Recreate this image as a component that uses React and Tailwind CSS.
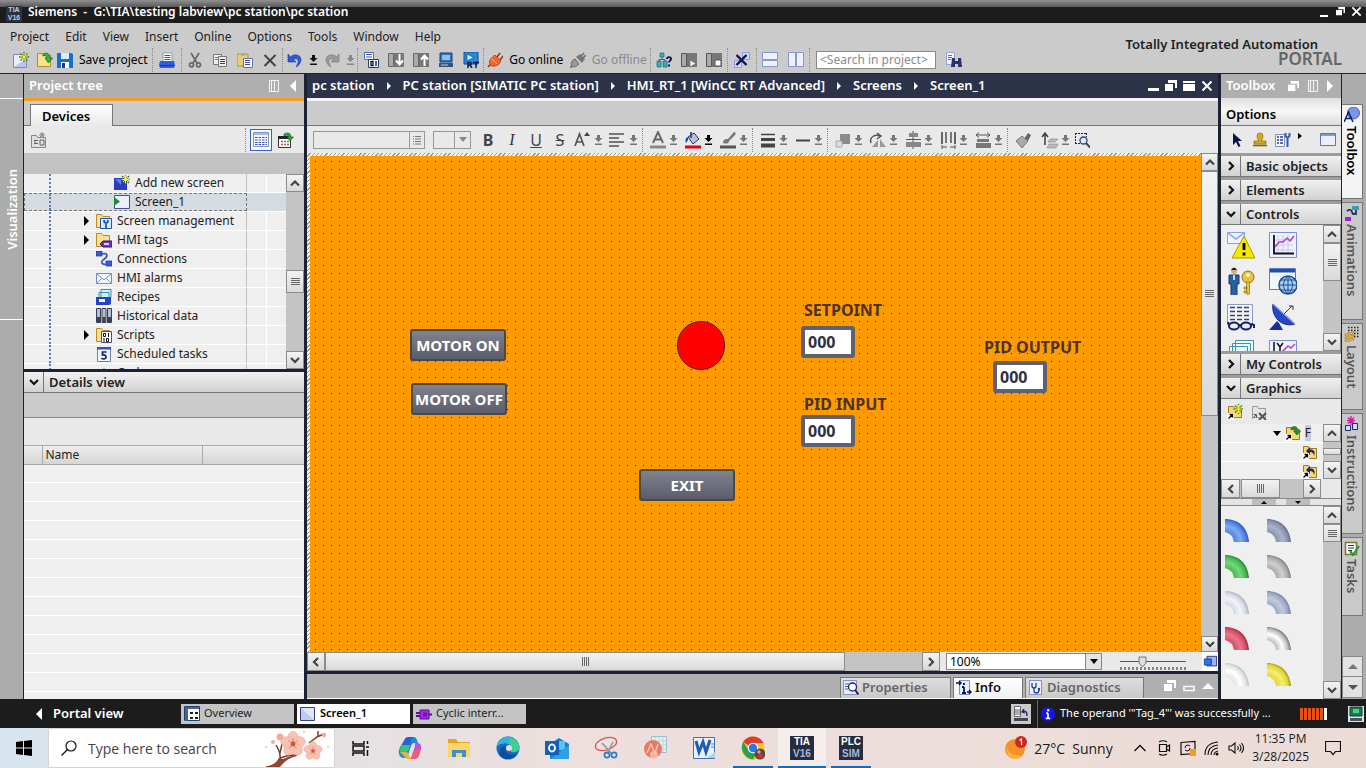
import clsx from 'clsx';

/* ---------- small building blocks ---------- */

const Ico = ({ children, className = 'w-4 h-4', box = '0 0 16 16' }) => (
  <svg viewBox={box} className={clsx('shrink-0', className)} aria-hidden="true">{children}</svg>
);

const chevrons = {
  up: 'M3 9.5 L7 5.5 L11 9.5',
  down: 'M3 5 L7 9 L11 5',
  left: 'M9 3 L5 7 L9 11',
  right: 'M5 3 L9 7 L5 11',
};

const Chevron = ({ dir, color = '#444', className = 'w-[14px] h-[14px]' }) => (
  <Ico box="0 0 14 14" className={className}>
    <path d={chevrons[dir]} fill="none" stroke={color} strokeWidth="2.2" />
  </Ico>
);

const ScrollButton = ({ dir, className }) => (
  <button
    aria-label={`Scroll ${dir}`}
    className={clsx('shrink-0 flex items-center justify-center border border-[#8c8c8c] bg-linear-to-b from-[#f4f4f4] to-[#d8d8d8]', className)}
  >
    <Chevron dir={dir} />
  </button>
);

const Grip = ({ vertical }) => (
  <Ico box="0 0 9 9" className="w-[9px] h-[9px]">
    <path
      d={vertical ? 'M0 1.5H9M0 3.5H9M0 5.5H9M0 7.5H9' : 'M1.5 0V9M3.5 0V9M5.5 0V9M7.5 0V9'}
      stroke="#666"
      strokeWidth="1"
    />
  </Ico>
);

const Thumb = ({ vertical, className, grip = true }) => (
  <div className={clsx('shrink-0 flex items-center justify-center border border-[#8c8c8c] bg-linear-to-b from-[#f2f2f2] to-[#dadada]', className)}>
    {grip && <Grip vertical={vertical} />}
  </div>
);

const DropArrow = ({ color = '#777' }) => (
  <Ico box="0 0 9 12" className="w-[9px] h-3">
    <path d="M3 1h3v3h2.500L4.500 8L.5 4H3zM1 9.500h7v1.500H1z" fill={color} />
  </Ico>
);

const WinRestore = ({ className = 'w-3 h-3' }) => (
  <Ico box="0 0 12 12" className={className}>
    <path d="M3 0h9v8h-2V3H3z" fill="#fff" />
    <path d="M0 4h8v7H0z" fill="#fff" />
  </Ico>
);

const Columns = () => (
  <Ico box="0 0 12 12" className="w-3 h-3">
    <path d="M1.500 1v10M3.500 1v10M1 .5h5M1 11.500h5M6.500.5h4v11h-4z" fill="none" stroke="#f4f4f4" />
  </Ico>
);

const CloseX = ({ color = '#fff', className = 'w-3 h-3' }) => (
  <Ico box="0 0 12 12" className={className}>
    <path d="M1.500 1.500l9 9M10.500 1.500l-9 9" stroke={color} strokeWidth="2" />
  </Ico>
);

/* ---------- icon drawings ---------- */

const Star = ({ x = 11, y = 5 }) => (
  <g transform={`translate(${x} ${y})`}>
    <path d="M0-5V5M-5 0H5M-3.500-3.500L3.500 3.500M3.500-3.500L-3.500 3.500" stroke="#3b6b18" strokeWidth="1.300" />
    <path d="M0-4V4M-4 0H4M-2.500-2.500L2.500 2.500M2.500-2.500L-2.500 2.500" stroke="#f2f53a" strokeWidth="1" />
  </g>
);

const Folder = () => (
  <path d="M.5 1.500h5l1.500 2h6.500v11H.5z" fill="#fbe08b" stroke="#b98a2b" />
);

const icons = {
  newFile: <><path d="M.5 2.500h10l3 3v10H.5z" fill="#e8edff" stroke="#7d88bd" /><path d="M1 15l12-8v8z" fill="#b9c6ef" /><Star /></>,
  open: <><Folder /><path d="M6 2c4-2 7 0 7 4h2.500L11.500 11 8 6h2c0-2-2-3-4-2z" fill="#3fae3f" stroke="#14691f" strokeWidth=".8" /></>,
  save: <><path d="M0 1h14l2 1v14H0z" fill="#1672c9" /><path d="M4 1h8v6H4z" fill="#d9ecfb" /><path d="M4 10h8v6H4z" fill="#fff" /><path d="M5 11h3v5H5z" fill="#1b3d6e" /></>,
  print: <><path d="M4 1h9v9H4z" fill="#fff" stroke="#8b97c4" /><path d="M5.500 3.500h6M5.500 5.500h6M5.500 7.500h6" stroke="#3a4ba5" /><path d="M1 9h14l1 4-1 3H1l-1-3z" fill="#2f5be0" /><path d="M1 13.500h14" stroke="#1c348f" /></>,
  cut: <g fill="none" stroke="#6a6a6a" strokeWidth="1.700"><path d="M4 1l6 10M12 1L6 11" /><circle cx="4.500" cy="12.800" r="2" /><circle cx="11.500" cy="12.800" r="2" /></g>,
  copy: <g fill="#eee" stroke="#777"><path d="M1.500 2.500h8v10h-8z" /><path d="M3 5.500h4M3 7.500h4" /><path d="M6.500 4.500h8v10h-8z" /><path d="M8 7.500h5M8 9.500h5M8 11.500h5" stroke="#444" /></g>,
  paste: <><path d="M0 2h11v12H0z" fill="#e7cf6d" stroke="#a89443" /><path d="M4 1h4v3H4z" fill="#9fa9c4" /><path d="M6.500 6.500h9v9h-9z" fill="#fff" stroke="#6672ab" /><path d="M8 8.500h5M8 10.500h5M8 12.500h5" stroke="#3b479a" /></>,
  del: <path d="M2.500 3l11 11M13.500 3l-11 11" stroke="#444" strokeWidth="2" />,
  undo: <path d="M1 2v8h8L6.500 7.500C10 5.500 13 8 10 13l-1 2c6-3 7-11 1-12-2.500-.5-4.500 0-6.500 2z" fill="#3257d8" stroke="#203a9c" strokeWidth=".6" />,
  redo: <path d="M15 2v8H7l2.500-2.500C6 5.500 3 8 6 13l1 2C1 12 0 4 6 3c2.500-.5 4.500 0 6.500 2z" fill="#9a9a9a" stroke="#777" strokeWidth=".6" />,
  compile: <><path d="M1.500.5h9v7h-9z" fill="#fff" stroke="#5b6c96" /><path d="M3 2.500h6M3 5h6" stroke="#2f57c9" /><path d="M5.500 7.500h10v8h-10z" fill="#f4f8ff" stroke="#243b74" /><path d="M8 9.500h2v4H8zM13 9v5" stroke="#111" fill="none" strokeWidth="1.300" /></>,
  download: <><path d="M.5 1.500h5v13h-5z" fill="#aaa" stroke="#666" /><path d="M6 1h10v14H6z" fill="#777" /><path d="M11.500 2v10M8 8.500l3.500 4 3.500-4" stroke="#fff" strokeWidth="2" fill="none" /></>,
  upload: <><path d="M.5 1.500h5v13h-5z" fill="#aaa" stroke="#666" /><path d="M6 1h10v14H6z" fill="#777" /><path d="M11.500 14V4M8 7.500l3.500-4 3.500 4" stroke="#fff" strokeWidth="2" fill="none" /></>,
  simPc: <><path d="M2 1h12v9H2z" fill="#3273b8" stroke="#1c3f72" /><path d="M4 3h8v5H4z" fill="#83c4ec" /><path d="M1 11h14v4H1z" fill="#35527c" /><path d="M3 13h7" stroke="#bcd" /></>,
  rt: <><path d="M1 0h14v12H1z" fill="#2487e0" stroke="#0d4f97" /><path d="M4 2v7l7-3.500z" fill="#bff0ff" stroke="#0b3a6e" strokeWidth=".6" /><path d="M5 16v-5.500h2.500q1.500 1.200 0 2.500H5M7 13l2 3M10 10.500h6M13 10.500V16" stroke="#0b1a4c" strokeWidth="1.500" fill="none" /></>,
  plugOn: <><path d="M1 15l3-3M10 5l3-4M13 8l3-4" stroke="#8d3a12" strokeWidth="1.600" /><path d="M3 13c-2-4 1-7 5-10l6 6c-2 4-6 7-11 4z" fill="#f0672b" stroke="#b23a0c" strokeWidth=".8" /><path d="M5 7l5 5" stroke="#ffc19e" /></>,
  plugOff: <><path d="M0 16l4-4M10 5l4-4M12 7l4-4" stroke="#666" strokeWidth="1.500" /><path d="M2 14c-2-3 0-6 3-7l4 5c-2 2-5 4-7 2z" fill="#999" stroke="#666" /><path d="M6 5l4-3 5 5-3 4z" fill="#777" /></>,
  access: <><path d="M4 1h4v4H4zM1 9h4v6H1zM7 9h4v6H7z" fill="#37b0b4" stroke="#126f72" strokeWidth=".7" /><path d="M6 5v3M3 9V7.500h6V9" stroke="#7b3fae" fill="none" /><path d="M11 7c0-2.500 4-2.500 4 0 0 1.500-2 1.800-2 3.500" stroke="#0c1650" strokeWidth="1.900" fill="none" /><path d="M12 12.500h2v2h-2z" fill="#0c1650" /></>,
  cpuStart: <><path d="M.5 1.500h5v13h-5z" fill="#aaa" stroke="#555" /><path d="M6 1h10v14H6z" fill="#777" /><path d="M9 8v7l6-3.500z" fill="#eee" stroke="#555" strokeWidth=".5" /></>,
  cpuStop: <><path d="M.5 1.500h5v13h-5z" fill="#aaa" stroke="#555" /><path d="M6 1h10v14H6z" fill="#777" /><path d="M9 8h6v6H9z" fill="#fff" stroke="#555" /></>,
  crossRef: <><path d="M8.500.5h7v7h-7zM.5 8.500h7v7h-7z" fill="#cfd9fb" stroke="#8da0dd" /><path d="M2.500 3l10 10M12.500 3l-10 10" stroke="#0c1650" strokeWidth="2.400" /></>,
  splitH: <path d="M.5.5h15v7H.5zM.5 8.500h15v6H.5z" fill="#f0f3ff" stroke="#8396dc" />,
  splitV: <path d="M.5.5h7v14h-7zM8.500.5h7v14h-7z" fill="#f0f3ff" stroke="#8396dc" />,
  find: <><path d="M.5.5h8v12h-8z" fill="#eef2ff" stroke="#98a6d8" /><path d="M2 3.500h4M2 5.500h4M2 7.500h3" stroke="#5470cf" /><path d="M6 6h3v9H5zM12 6h3l1 9h-4zM9 9h3v3H9z" fill="#27356d" /></>,
  newDevice: <g fill="none" stroke="#888"><path d="M.5 3.500h5l1 2h8v10H.5z" fill="#e0e0e0" /><path d="M3 8.500h4M3 11.500h4M9 8h4v5H9zM4 8v4" stroke="#666" /><path d="M11 0v6M8 3h6M9 1l4 4M13 1L9 5" /></g>,
  listView: <><path d="M.5.5h15v14H.5z" fill="#f5f8ff" stroke="#8593c2" /><path d="M1 1h14v2H1z" fill="#a9bbed" /><path d="M2 5.500h12M2 8h12M2 10.500h12M2 12.500h12" stroke="#3f56a8" strokeDasharray="2.500 1" /></>,
  export: <><path d="M.5 4.500h12v11H.5z" fill="#fff" stroke="#333" /><path d="M0 4h13v3H0z" fill="#223" /><path d="M3 9.500h8M3 12.500h8" stroke="#a9603a" strokeWidth="1.600" strokeDasharray="2 1" /><path d="M6 2c4-2 7-1 7 3h2.500L12 9 9 5h1.500C10 3 8 3 6 4z" fill="#2f9b3c" stroke="#125a1c" strokeWidth=".6" /></>,
  addScreen: <><path d="M0 3h13v12H0z" fill="#2b3cc4" /><path d="M1 4h6v6z" fill="#6a7ae8" /><Star x={11.5} y={4.5} /></>,
  screen: <><path d="M.5 1.500h15v13H.5z" fill="#e8f0fb" stroke="#3e5385" /><path d="M0 3v9l6-4.500z" fill="#1d8a34" /></>,
  screenMgmt: <><Folder /><path d="M4.500 5.500h11v10h-11z" fill="#dbe9ff" stroke="#2953a6" /><path d="M10 15v-5M8 7q0 3 2 3t2-3" stroke="#1d4fb5" strokeWidth="1.700" fill="none" /></>,
  tags: <><Folder /><path d="M4 12l3-3h9v6H7z" fill="#6a36b8" stroke="#35157a" /><path d="M8 12h5" stroke="#fff" strokeWidth="1.500" /></>,
  connections: <><path d="M0 0h6v5H0zM10 10h6v5h-6z" fill="#3c5bd4" stroke="#1c3294" strokeWidth=".7" /><path d="M5 3c8-2 7 3 2 6-3 3 0 5 4 4" fill="none" stroke="#3454cd" strokeWidth="1.700" /></>,
  alarms: <g fill="#f7faff" stroke="#6d8fdc"><path d="M.5 3.500h15v10H.5z" /><path d="M1 4l7 6 7-6M1 13l5-5M15 13l-5-5" fill="none" /></g>,
  recipes: <><path d="M5 .5h10v8H5zM3 3.500h10v7H3z" fill="#d2f0f7" stroke="#3792aa" /><path d="M0 8h15v7l-2 1H0z" fill="#2443c4" /><path d="M3 10h6v3H3z" fill="#fff" /></>,
  history: <><path d="M.5.500h4v14h-4zM6 .5h4v14H6zM11.500.5h4v14h-4z" fill="#b9bfcc" stroke="#3a4053" /><path d="M1 9h3v5H1zM6.500 9h3v5h-3zM12 9h3v5h-3z" fill="#38405c" /></>,
  scripts: <><Folder /><path d="M5.500 4.500h10v11h-10z" fill="#fff" stroke="#44527e" /><path d="M7.500 6.500h2v3h-2zM12.500 6v4M8 11v4M10.500 11.500h2v3h-2z" fill="none" stroke="#111" /></>,
  tasks: <><path d="M1.500 1.500h13v14h-13z" fill="#f3f6ff" stroke="#7182bd" /><path d="M1 1h14v2.500H1z" fill="#2e4fd0" /><path d="M10.500 6h-4v3c4-.8 5 4 1 4-1 0-1.500-.3-2-.8" fill="none" stroke="#14246e" strokeWidth="1.700" /></>,
  cycles: <path d="M2 7h3l3-4 3 4h3l-6 7z" fill="#4d5fc0" />,
};

const IconButton = ({ name, label, className = 'w-5 h-5' }) => (
  <button aria-label={label || name} className={clsx('flex items-center justify-center shrink-0', className)}>
    <Ico>{icons[name]}</Ico>
  </button>
);

const Group = ({ className, start, children }) => (
  <div className={clsx('h-6 shrink-0 flex items-center border-r border-dotted border-[#8a8a8a]', start ? 'justify-start' : 'justify-around', className)}>
    {children}
  </div>
);

/* ---------- title bar, menu and main toolbar ---------- */

const TitleBar = () => (
  <header className="h-[23px] shrink-0 flex items-center justify-between pl-1.5 pr-1 text-white bg-linear-to-b from-[#909090] via-[#5a5a5a] via-30% to-[#1c1c1c] to-31%">
    <div className="flex items-center gap-1.5">
      <span className="w-4 h-4 mt-1 bg-[#2a3143] text-[7px] leading-[8px] font-bold font-['Liberation_Sans',sans-serif] text-[#c3cce2] flex flex-col items-center">
        <span>TIA</span><span>V16</span>
      </span>
      <h1 className="text-[12px] leading-4 font-semibold whitespace-pre">Siemens  -  G:\TIA\testing labview\pc station\pc station</h1>
    </div>
    <div className="flex items-center gap-1.5">
      <button aria-label="Minimize"><Ico box="0 0 12 12" className="w-3 h-3"><path d="M2 9h8v2H2z" fill="#fff" /></Ico></button>
      <button aria-label="Restore"><WinRestore className="w-[9px] h-[9px]" /></button>
      <button aria-label="Close"><CloseX className="w-[11px] h-[11px]" /></button>
    </div>
  </header>
);

const menu = ['Project', 'Edit', 'View', 'Insert', 'Online', 'Options', 'Tools', 'Window', 'Help'];

const MainToolbar = () => (
  <div className="h-[51px] shrink-0 flex justify-between bg-[#cbcbcb] border-b border-[#1c2233]">
    <div>
      <nav className="h-[25px] pl-2.5 pt-[3px] flex items-center gap-4">
        {menu.map((item) => <button key={item} className="leading-5">{item}</button>)}
      </nav>
      <div className="h-6 pl-[9px] flex items-center">
        <Group className="w-[144px]">
          <IconButton name="newFile" label="New project" className="w-6 h-5" />
          <IconButton name="open" label="Open project" className="w-6 h-5" />
          <button className="flex-1 flex items-center gap-1.5 text-black whitespace-nowrap"><Ico>{icons.save}</Ico>Save project</button>
        </Group>
        <Group className="w-[29px]"><IconButton name="print" /></Group>
        <Group className="w-[101px]">
          <IconButton name="cut" /><IconButton name="copy" /><IconButton name="paste" /><IconButton name="del" label="Delete" />
        </Group>
        <Group className="w-[75px]">
          <IconButton name="undo" className="w-5 h-5" /><DropArrow color="#111" />
          <IconButton name="redo" className="w-5 h-5" /><DropArrow color="#888" />
        </Group>
        <Group className="w-[126px]">
          <IconButton name="compile" /><IconButton name="download" /><IconButton name="upload" />
          <IconButton name="simPc" label="Start simulation" /><IconButton name="rt" label="Start runtime" />
        </Group>
        <Group className="w-[167px]">
          <button className="flex items-center gap-1.5 text-black"><Ico>{icons.plugOn}</Ico>Go online</button>
          <button className="flex items-center gap-1.5 text-[#8a8a8a]"><Ico>{icons.plugOff}</Ico>Go offline</button>
        </Group>
        <Group className="w-[77px]">
          <IconButton name="access" label="Accessible devices" /><IconButton name="cpuStart" label="Start CPU" /><IconButton name="cpuStop" label="Stop CPU" />
        </Group>
        <Group className="w-[29px]"><IconButton name="crossRef" label="Cross-references" /></Group>
        <Group className="w-[53px]"><IconButton name="splitH" label="Split horizontally" /><IconButton name="splitV" label="Split vertically" /></Group>
        <input
          aria-label="Search in project"
          placeholder="<Search in project>"
          className="ml-1.5 w-[120px] h-[18px] px-[3px] bg-white border border-[#888] placeholder:text-[#8c8c8c] text-[12px]"
        />
        <IconButton name="find" label="Find" className="ml-2 w-5 h-5" />
      </div>
    </div>
    <div className="pt-[13px] pr-6 text-right font-semibold">
      <div className="text-[13px] leading-4 pr-6 text-[#222]">Totally Integrated Automation</div>
      <div className="text-[17px] leading-[14px] text-[#666]">PORTAL</div>
    </div>
  </div>
);

/* ---------- project tree ---------- */

const treeRows = [
  { label: 'Add new screen', icon: 'addScreen', deep: true },
  { label: 'Screen_1', icon: 'screen', deep: true, selected: true },
  { label: 'Screen management', icon: 'screenMgmt', folder: true },
  { label: 'HMI tags', icon: 'tags', folder: true },
  { label: 'Connections', icon: 'connections' },
  { label: 'HMI alarms', icon: 'alarms' },
  { label: 'Recipes', icon: 'recipes' },
  { label: 'Historical data', icon: 'history' },
  { label: 'Scripts', icon: 'scripts', folder: true },
  { label: 'Scheduled tasks', icon: 'tasks' },
  { label: 'Cycles', icon: 'cycles' },
];

const ProjectTree = () => (
  <section className="w-[280px] shrink-0 flex flex-col">
    <div className="h-6 shrink-0 flex items-center justify-between pl-[5px] pr-2 bg-[#afafaf] text-white">
      <h2 className="text-[13px] font-semibold">Project tree</h2>
      <div className="flex items-center gap-2.5">
        <Columns />
        <Ico box="0 0 6 12" className="w-1.5 h-3"><path d="M6 0v12L0 6z" fill="#fff" /></Ico>
      </div>
    </div>
    <div className="h-[3px] shrink-0 bg-[#f29f1f]" />
    <div className="h-[25px] shrink-0 flex items-end pl-1.5 bg-[#cbcbcb] border-b border-[#777]">
      <button className="w-[83px] h-[22px] -mb-px pl-[11px] text-left text-[13px] leading-5 font-semibold text-black bg-linear-to-b from-white to-[#e9e9e9] border border-b-0 border-[#777]">Devices</button>
    </div>
    <div className="h-[27px] shrink-0 flex items-center pl-[5px] pr-2 bg-[#e9e9e9]">
      <IconButton name="newDevice" label="Add device" />
      <div className="ml-auto h-6 flex items-center gap-1 pl-1 border-l border-dotted border-[#888]">
        <IconButton name="listView" label="Details list" className="w-[22px] h-[22px] border border-[#3d62b8] bg-[#f4f8ff]" />
        <IconButton name="export" />
      </div>
    </div>
    <div className="h-[21px] shrink-0 bg-[#c2c2c2]" />
    <div className="h-[195px] shrink-0 flex bg-[#efefef]">
      <ul className="flex-1 overflow-hidden bg-[linear-gradient(to_right,transparent_222px,#c4c4c4_222px,#c4c4c4_223px,transparent_223px,transparent_242px,#fff_242px,#fff_243px,transparent_243px)]">
        {treeRows.map((row) => (
          <li key={row.label} className={clsx('h-[19px] flex border-b border-white', row.selected && 'bg-[#d5dce1]')}>
            <div className={clsx('w-[223px] flex items-center', row.selected && 'border border-dashed border-[#777]')}>
              <span className={clsx('h-full border-r-2 border-dotted border-[#5b7cc4]', row.selected ? 'w-[26px]' : 'w-[27px]')} />
              <span className={clsx('flex justify-end', row.deep ? 'w-[63px]' : 'w-[45px]')}>
                {row.folder && <Ico box="0 0 5 10" className="w-[5px] h-2.5 mr-[7px]"><path d="M0 0l5 5-5 5z" fill="#000" /></Ico>}
              </span>
              <Ico>{icons[row.icon]}</Ico>
              <span className="pl-[5px] leading-[18px]">{row.label}</span>
            </div>
          </li>
        ))}
      </ul>
      <div className="w-[18px] shrink-0 flex flex-col bg-[#c4c4c4]">
        <ScrollButton dir="up" className="h-[18px]" />
        <div className="flex-1" />
        <Thumb vertical className="h-[23px]" />
        <div className="h-[58px]" />
        <ScrollButton dir="down" className="h-[18px]" />
      </div>
    </div>
    <div className="h-[3px] shrink-0 bg-[#1c2233]" />
    <SectionHeader title="Details view" open />
    <div className="h-[25px] shrink-0 bg-[#cbcbcb] border-b border-[#888]" />
    <div className="h-[27px] shrink-0 bg-[#e9e9e9]" />
    <div className="flex-1 overflow-hidden bg-[repeating-linear-gradient(#efefef_0,#efefef_18px,#fff_18px,#fff_19px)]">
      <table className="w-full table-fixed">
        <thead>
          <tr className="h-[19px] bg-linear-to-b from-[#ededed] to-[#d4d4d4] text-left">
            <th aria-label="State" className="w-[18px] p-0 border border-l-0 border-[#aaa]" />
            <th className="w-[160px] p-0 pl-[3px] font-normal leading-4 border border-[#aaa]">Name</th>
            <th aria-label="Address" className="p-0 border border-r-0 border-[#aaa]" />
          </tr>
        </thead>
      </table>
    </div>
  </section>
);

function SectionHeader({ title, open }) {
  return (
    <button className="w-full h-[21px] shrink-0 flex items-center text-left bg-linear-to-b from-[#f0f0f0] to-[#d2d2d2] border-b border-[#777]">
      <span className="w-5 h-full flex items-center justify-center border-r border-[#777]">
        <Chevron dir={open ? 'down' : 'right'} color="#111" />
      </span>
      <span className="pl-[5px] text-[13px] leading-5 font-semibold text-[#222]">{title}</span>
    </button>
  );
}

/* ---------- screen editor ---------- */

const crumbs = ['pc station', 'PC station [SIMATIC PC station]', 'HMI_RT_1 [WinCC RT Advanced]', 'Screens', 'Screen_1'];

const Pair = ({ label, tight, active, children }) => (
  <button aria-label={label} className={clsx('w-[35px] shrink-0 flex items-center', tight ? 'gap-0.5' : 'pl-[5px] gap-px')}>
    <Ico box="0 0 20 18" className="w-5 h-[18px]">{children}</Ico>
    <DropArrow color={active ? '#000' : '#777'} />
  </button>
);

const FormatToolbar = () => (
  <div className="h-[27px] shrink-0 flex items-center pl-1.5 bg-[#e9e9e9] overflow-hidden">
    <div className="h-[18px] flex border border-[#999]">
      <input aria-label="Font" className="w-[95px] bg-[#e9e9e9]" />
      <button aria-label="Choose font" className="w-[15px] flex items-center justify-center border-l border-[#999]">
        <Ico box="0 0 12 12" className="w-3 h-3"><path d="M2 2.500h1M4 2.500h6M2 5h1M4 5h6M2 7.500h1M4 7.500h6M2 10h1M4 10h6" stroke="#777" /></Ico>
      </button>
    </div>
    <div className="ml-2 h-[18px] flex border border-[#999]">
      <input aria-label="Font size" className="w-5 bg-[#e9e9e9]" />
      <button aria-label="Choose size" className="w-4 flex items-center justify-center border-l border-[#999]">
        <Ico box="0 0 8 5" className="w-2 h-[5px]"><path d="M0 0h8L4 5z" fill="#888" /></Ico>
      </button>
    </div>
    <Group start className="w-[167px] ml-[5px]">
      <button className="w-6 text-[16px] leading-5 font-bold text-[#444]">B</button>
      <button className="w-6 text-[16px] leading-5 font-medium italic font-['Liberation_Serif',serif] text-[#333]">I</button>
      <button className="w-6 text-[16px] leading-5 underline text-[#444]">U</button>
      <button className="w-6 text-[16px] leading-5 line-through text-[#444]">S</button>
      <Pair label="Font size step" tight>
        <path d="M3 15L7.500 3 12 15M4.500 11h6" stroke="#555" strokeWidth="1.700" fill="none" /><path d="M12 5l3-4 3 4z" fill="#444" />
      </Pair>
      <Pair label="Alignment" tight>
        <path d="M2 3h15M2 7h10M2 11h15M2 15h10" stroke="#777" strokeWidth="2" />
      </Pair>
    </Group>
    <Group start className="w-[110px]">
      <Pair label="Text colour"><path d="M5 12L10 1l5 11M7 8.500h6" stroke="#666" strokeWidth="1.900" fill="none" /><path d="M2 14.500h16v3H2z" fill="#888" /></Pair>
      <Pair label="Fill colour" active>
        <path d="M5 6l6-4 5 6-6 5z" fill="#b7c3da" stroke="#27345c" /><path d="M8 1v6" stroke="#27345c" strokeWidth="1.500" />
        <path d="M5 6c-3 1-3 4-2 6l2-3z" fill="#2046b8" /><path d="M2 14.500h16v3H2z" fill="#e60012" />
      </Pair>
      <Pair label="Line colour"><path d="M5 12c0-4 3-4 5-4l6-7c2 0 2 2 1 3l-6 6c0 3-3 3-6 2z" fill="#777" /><path d="M2 14.500h16v3H2z" fill="#555" /></Pair>
    </Group>
    <Group start className="w-[75px]">
      <Pair label="Line width"><path d="M3 3.500h14" stroke="#444" strokeWidth="1.500" /><path d="M3 8.500h14" stroke="#444" strokeWidth="3" /><path d="M3 14.500h14" stroke="#444" strokeWidth="4" /></Pair>
      <Pair label="Line style"><path d="M3 9.500h14" stroke="#444" strokeWidth="2" /></Pair>
    </Group>
    <Group start className="w-[180px]">
      <Pair label="Order"><path d="M7 3h10v10H7z" fill="#8b8b8b" /><path d="M3 10h6v6H3z" fill="#ddd" stroke="#aaa" /></Pair>
      <Pair label="Rotate"><path d="M3 12c-2-6 4-9 9-7M9 2l4 3-4 3" stroke="#555" strokeWidth="1.500" fill="none" /><path d="M4 16h6V9zM12 8l6 8h-6z" fill="#999" /></Pair>
      <Pair label="Align"><path d="M10 0v18M3 8.500h15" stroke="#555" /><path d="M6 2h9v4H6zM3 11h15v5H3z" fill="#888" /></Pair>
      <Pair label="Distribute"><path d="M4 1v12M17 1v12" stroke="#666" strokeWidth="2" /><path d="M7 1h2v11H7zM12 1h2v11h-2z" fill="#777" /><path d="M4 16h5M12 16h5M4 14v4M17 14v4" stroke="#555" /></Pair>
      <Pair label="Same width"><path d="M3 4h14M6 1.500L3 4l3 2.500M14 1.500L17 4l-3 2.500" stroke="#555" fill="none" /><path d="M4 8h12v3H4zM3 12h15v5H3z" fill="#777" /></Pair>
    </Group>
    <button aria-label="Format painter" className="ml-[7px] w-5"><Ico><path d="M9 7l4-6 3 2-3 6z" fill="#666" /><path d="M1 9l6-5 6 5-6 7z" fill="#aaa" stroke="#777" /></Ico></button>
    <Pair label="Tab order"><path d="M5 14V3M2 6l3-4 3 4" stroke="#444" strokeWidth="1.600" fill="none" /><path d="M10 8h8l-3 3H8zM9 13h9l-2 4H7z" fill="#bbb" stroke="#888" strokeWidth=".6" /></Pair>
    <button aria-label="Zoom selection" className="ml-1 w-5">
      <Ico><path d="M1 1.500h12M1.500 1v11M1 11.500h5M12.500 1v4" stroke="#223" strokeDasharray="2 1" /><circle cx="9.500" cy="8.500" r="3.500" fill="#dfe9ff" stroke="#3b4663" strokeWidth="1.300" /><path d="M12 11l4 4.500" stroke="#3b4663" strokeWidth="2" /></Ico>
    </button>
  </div>
);

const HmiButton = ({ className, children }) => (
  <button className={clsx('absolute w-24 h-8 rounded-[3px] border-2 border-[#4b4744] bg-linear-to-b from-[#80828e] to-[#5b5d6a] text-white text-[15px] leading-7 font-bold whitespace-nowrap flex justify-center', className)}>
    {children}
  </button>
);

const IoField = ({ id, label, className, labelClass }) => (
  <>
    <label htmlFor={id} className={clsx('absolute text-[16px] leading-5 font-bold text-[#4a3426] whitespace-nowrap', labelClass)}>{label}</label>
    <input id={id} defaultValue="000" className={clsx('absolute w-[54px] h-8 rounded-[3px] border-4 border-[#5f6170] bg-white pl-[3px] text-[16px] font-bold text-[#2f3040]', className)} />
  </>
);

const Editor = () => (
  <main className="flex-1 min-w-0 flex flex-col">
    <div className="h-6 shrink-0 flex items-center justify-between pl-[5px] pr-[5px] bg-[#2c3349] text-white">
      <nav className="flex items-center text-[13px] font-semibold whitespace-nowrap">
        {crumbs.map((crumb, i) => (
          <span key={crumb} className="flex items-center">
            {i > 0 && <Ico box="0 0 4 8" className="w-1 h-2 mx-3"><path d="M0 0l4 4-4 4z" fill="#fff" /></Ico>}
            <a href="#">{crumb}</a>
          </span>
        ))}
      </nav>
      <div className="flex items-center gap-1.5">
        <Ico box="0 0 12 12" className="w-3 h-3"><path d="M1 8h11v3H1z" fill="#fff" /></Ico>
        <WinRestore />
        <Ico box="0 0 12 12" className="w-3 h-3"><path d="M0 1h12v2H0zM0 4h12v7H0z" fill="#fff" /></Ico>
        <CloseX />
      </div>
    </div>
    <div className="h-[3px] shrink-0 bg-[#f4f4f4]" />
    <div className="h-[25px] shrink-0 bg-[#cbcbcb] border-b border-[#777]" />
    <FormatToolbar />

    <div className="flex-1 min-h-0 flex">
      <div className="flex-1 pt-[3px] pl-[3px] bg-[repeating-linear-gradient(135deg,#f4f4f4_0,#f4f4f4_2px,#999_2px,#999_3px)]">
        <div className="relative h-full overflow-hidden bg-[#ff9a00] bg-[linear-gradient(to_right,transparent_1px,#ff9a00_1px),linear-gradient(#3d2500_1px,transparent_1px)] bg-[size:8px_8px] bg-[position:5px_5px]">
          <HmiButton className="left-[100px] top-[173px]">MOTOR ON</HmiButton>
          <HmiButton className="left-[101px] top-[227px]">MOTOR OFF</HmiButton>
          <HmiButton className="left-[329px] top-[313px]">EXIT</HmiButton>
          <div className="absolute left-[367px] top-[165px] w-12 h-[49px] rounded-full bg-[#ff0000] border border-[#5a1e10]" />
          <IoField id="setpoint" label="SETPOINT" className="left-[491px] top-[170px]" labelClass="left-[494px] top-[144px]" />
          <IoField id="pid-input" label="PID INPUT" className="left-[491px] top-[259px]" labelClass="left-[494px] top-[238px]" />
          <IoField id="pid-output" label="PID OUTPUT" className="left-[683px] top-[205px]" labelClass="left-[674px] top-[181px]" />
        </div>
      </div>
      <div className="w-[17px] shrink-0 flex flex-col bg-[#c4c4c4]">
        <ScrollButton dir="up" className="h-[18px]" />
        <Thumb vertical className="h-[245px]" />
        <div className="flex-1" />
        <ScrollButton dir="down" className="h-4" />
      </div>
    </div>

    <div className="h-[19px] shrink-0 flex bg-[#e9e9e9]">
      <div className="flex-1 flex bg-[#c4c4c4]">
        <ScrollButton dir="left" className="w-[18px]" />
        <Thumb className="w-[520px]" />
        <div className="flex-1" />
        <ScrollButton dir="right" className="w-[18px]" />
      </div>
      <div className="ml-1.5 my-px w-[156px] flex border border-[#888] bg-white">
        <input aria-label="Zoom" defaultValue="100%" className="flex-1 min-w-0 pl-[3px] text-black" />
        <button aria-label="Choose zoom" className="w-4 flex items-center justify-center border-l border-[#888] bg-[#e4e4e4]">
          <Ico box="0 0 8 5" className="w-2 h-[5px]"><path d="M0 0h8L4 5z" fill="#000" /></Ico>
        </button>
      </div>
      <div className="w-[100px] flex items-center justify-center">
        <Ico box="0 0 68 18" className="w-[68px] h-[18px] ml-1">
          <path d="M0 8.500h66" stroke="#555" />
          <path d="M.5 15.500h67" stroke="#222" strokeWidth="3" strokeDasharray="1 3" />
          <path d="M19 4h7v6l-3.500 4L19 10z" fill="#ddd" stroke="#777" />
        </Ico>
      </div>
      <div className="w-4 flex items-center justify-center bg-white">
        <Ico className="w-3.5 h-3.5"><path d="M4.500 1.500h11v11h-11z" fill="#9fb2f2" stroke="#1a2b7a" /><path d="M1.500 4.500h8v7h-8z" fill="#2e74f0" stroke="#1340a0" /></Ico>
      </div>
    </div>
    <div className="h-[3px] shrink-0 bg-[#1c2233]" />
    <div className="h-[25px] shrink-0 flex items-end justify-end pr-1.5 bg-[#b0b0b0] border-b border-white">
      <InspectorTab label="Properties" className="w-[111px]">
        <path d="M.5.5h13v14H.5z" fill="#e6edff" stroke="#7f92cc" /><path d="M2 4h4M2 6.500h3M2 9h3" stroke="#4862b8" /><circle cx="9.500" cy="7" r="4" fill="#fff" stroke="#222c4f" strokeWidth="1.300" /><path d="M12 10l3.500 4.500" stroke="#222c4f" strokeWidth="2" />
      </InspectorTab>
      <InspectorTab label="Info" active className="ml-0.5 w-[70px]">
        <path d="M3.500.5h10v14h-10z" fill="#e6edff" stroke="#7f92cc" /><path d="M8 7v6M6 7h2M6 13h4" stroke="#101a66" strokeWidth="1.800" fill="none" /><path d="M7 3h2v2H7z" fill="#101a66" />
        <path d="M0 3h5M3 1l2 2-2 2M11 12h4M13 10l2 2-2 2" stroke="#0b1550" strokeWidth="1.400" fill="none" />
      </InspectorTab>
      <InspectorTab label="Diagnostics" className="ml-0.5 w-[119px]">
        <path d="M1.500.5h12v14h-12z" fill="#eef2ff" stroke="#7f92cc" /><path d="M4 3v3q0 2 2 2t2-2V3M6 8v3q0 2 2.500 2t2.500-3" stroke="#1d3a94" strokeWidth="1.300" fill="none" /><circle cx="11" cy="9" r="1.200" fill="#1d3a94" />
      </InspectorTab>
      <div className="ml-5 h-full w-[48px] flex items-center gap-[7px]">
        <WinRestore />
        <Ico box="0 0 12 12" className="w-3 h-3"><path d="M1 6.500h10v4H1z" fill="none" stroke="#fff" strokeWidth="1.500" /></Ico>
        <Ico box="0 0 12 12" className="w-3 h-3"><path d="M0 9l6-6 6 6z" fill="#fff" /></Ico>
      </div>
    </div>
  </main>
);

const InspectorTab = ({ label, active, className, children }) => (
  <button className={clsx('h-[21px] shrink-0 flex items-center gap-[3px] pl-0.5 border border-b-0 border-[#777] text-[13px] font-semibold bg-linear-to-b', active ? 'from-white to-[#f0f0f0] text-[#111]' : 'from-[#dedede] to-[#c9c9c9] text-[#666]', className)}>
    <Ico>{children}</Ico>
    {label}
  </button>
);

/* ---------- toolbox ---------- */

const controls = [
  <><path d="M.5 1.500h17v11H.5z" fill="#eef3ff" stroke="#8ba0e0" /><path d="M1 2l8 6 8-6" fill="none" stroke="#8ba0e0" strokeWidth="1.500" /><path d="M17 5l11 22H5z" fill="#f8e800" stroke="#a99a00" /><path d="M17 12v7M17 21.500v3" stroke="#000" strokeWidth="2.800" /></>,
  <><path d="M.5 1.500h27v25H.5z" fill="#eef1ff" stroke="#7e8fd0" /><path d="M9 4v19M14 4v19M19 4v19M4 9h20M4 14h20M4 19h20" stroke="#c3cbee" /><path d="M5 4v18.500h20" fill="none" stroke="#111" strokeWidth="1.800" /><path d="M6 16l4-5h4l4-4 3 3 4-5" fill="none" stroke="#b13fd0" strokeWidth="1.500" /></>,
  <><circle cx="7" cy="4" r="3" fill="#d7a884" /><path d="M4 3q3-5 6 0z" fill="#222" /><path d="M2 8h10v9h-2v12H4V17H2z" fill="#2361a4" stroke="#123a69" /><path d="M7 8v5" stroke="#fff" strokeWidth="1.500" /><circle cx="21" cy="10" r="6" fill="#e9c53e" stroke="#8f7210" /><circle cx="21" cy="8" r="1.800" fill="#fff" /><path d="M19.500 15h3v12L21 28l-1.500-2zM17 20h3v2h-3zM17 24h3v2h-3z" fill="#e9c53e" stroke="#8f7210" strokeWidth=".7" /></>,
  <><path d="M.5 1.500h26v21H.5z" fill="#f2f6ff" stroke="#5a7cc4" /><path d="M1 2h25v3.500H1z" fill="#1f4fb0" /><circle cx="19" cy="18" r="9" fill="#a9cdf2" stroke="#1b4f92" strokeWidth="1.500" /><path d="M10 18h18M19 9v18M12 13h14M12 23h14M19 9c-6 5-6 13 0 18M19 9c6 5 6 13 0 18" fill="none" stroke="#1b4f92" /></>,
  <><path d="M.5 1.500h25v20H.5z" fill="#f1f4ff" stroke="#8c9acb" /><path d="M3 4.500h21M3 8.500h21M3 12.500h21M3 16.500h21" stroke="#444" strokeWidth="1.600" strokeDasharray="5 2" /><ellipse cx="7" cy="23" rx="5" ry="3.500" fill="#e6ecff" stroke="#16205a" strokeWidth="2" /><ellipse cx="19" cy="23" rx="5" ry="3.500" fill="#e6ecff" stroke="#16205a" strokeWidth="2" /><path d="M12 22h2M24 21l3 1v3M2 22l-1-3" stroke="#16205a" strokeWidth="2" fill="none" /></>,
  <><path d="M4 1C2 13 12 25 26 21z" fill="#2548c8" stroke="#14267c" /><path d="M4 1L26 21" stroke="#8da6f5" strokeWidth="1.300" /><path d="M15 11l8-8M20 3h4v4" stroke="#333" fill="none" /><path d="M8 18l-8 9h14l-4-7z" fill="#16319c" /></>,
  <><path d="M8.500 1.500h18v20h-18zM5.500 4.500h18v20h-18zM2.500 7.500h18v20h-18z" fill="#eef9fb" stroke="#3b95a5" /></>,
  <><path d="M.5 1.500h27v25H.5z" fill="#eef1ff" stroke="#7e8fd0" /><path d="M5 3v20M8 4l3 4 3-4M11 8v4" fill="none" stroke="#111" strokeWidth="1.500" /><path d="M13 13l6-6 3 2 4-4" fill="none" stroke="#b13fd0" strokeWidth="1.500" /></>,
];

const pipes = [
  ['blue', '#7faaf3', '#4a80e2', '#2555b5'], ['slate', '#a9b3c8', '#8591ab', '#5d6881'],
  ['green', '#74d67a', '#44b84f', '#1f7a2a'], ['gray', '#cfcfcf', '#a8a8a8', '#777777'],
  ['silver', '#f1f4fb', '#d0d6e2', '#a4acbb'], ['steel', '#c0c9df', '#9ca8c5', '#707c9a'],
  ['red', '#e8778a', '#d64a60', '#9c2438'], ['chrome', '#ffffff', '#b8b8b8', '#666666'],
  ['white', '#ffffff', '#e2e2e2', '#b8b8b8'], ['yellow', '#f4ef70', '#dfd537', '#918a12'],
];

const Pipe = ({ pipe: [id, light, mid, dark] }) => (
  <Ico box="0 0 24 24" className="w-6 h-6">
    <defs>
      <radialGradient id={`pipe-${id}`} gradientUnits="userSpaceOnUse" cx="0" cy="24" r="24">
        <stop offset=".36" stopColor={mid} />
        <stop offset=".66" stopColor={light} />
        <stop offset=".88" stopColor={mid} />
        <stop offset="1" stopColor={dark} />
      </radialGradient>
    </defs>
    <path d="M0 1C14 1 23 10 24 24H9Q8 16 0 14z" fill={`url(#pipe-${id})`} />
  </Ico>
);

const LinkFolder = ({ arrow }) => (
  <Ico>
    <path d="M1.500 2.500h5l1 2h7v10h-13z" fill="#f7d774" stroke="#a17a1c" />
    {arrow === 'green'
      ? <path d="M6 3c4-3 7-1 7 3h2.500L12 10 8.500 6h2C10 4 8 4 6 5z" fill="#279038" stroke="#105a1b" strokeWidth=".6" />
      : <path d="M12 12c2-5-1-7-4-6.500V3L4 7l4 4V8c2 0 4 1 4 4z" fill="#1d2a66" />}
    <path d="M0 9h7v7H0z" fill="#fff" /><path d="M1.500 14.500L5 11M2.500 10.500h3v3" stroke="#000" strokeWidth="1.300" fill="none" />
  </Ico>
);

const Toolbox = () => (
  <aside className="w-[120px] shrink-0 flex flex-col bg-[#9c9c9c]">
    <div className="h-6 shrink-0 flex items-center justify-between pl-[5px] pr-2 bg-[#afafaf] text-white">
      <h2 className="text-[13px] font-semibold">Toolbox</h2>
      <div className="flex items-center gap-2"><WinRestore className="w-[11px] h-[11px]" /><Columns /><Ico box="0 0 6 12" className="w-1.5 h-3"><path d="M0 0v12l6-6z" fill="#fff" /></Ico></div>
    </div>
    <div className="h-[28px] shrink-0 pt-[6px] pl-[5px] bg-linear-to-b from-[#e0e0e0] via-[#f8f8f8] to-[#dcdcdc] border-b border-[#777]">
      <h3 className="text-[13px] leading-5 font-semibold text-black">Options</h3>
    </div>
    <div className="h-[27px] shrink-0 mb-[3px] flex items-center gap-[7px] pl-2 pr-[5px] bg-[#e9e9e9]">
      <Ico className="w-4 h-4"><path d="M4 1v12l3-3 2.500 5 2-1L9 9h4z" fill="#0d1550" /></Ico>
      <Ico className="w-4 h-4"><path d="M5 4q0-3 3-3t3 3-2 5h5v3H2V9h5Q5 7 5 4z" fill="#dba918" stroke="#8a6a0b" strokeWidth=".7" /><path d="M1 13.500h14" stroke="#8a6a0b" strokeWidth="1.700" /></Ico>
      <Ico className="w-4 h-4"><path d="M.5 2.500h9v12h-9z" fill="#f3f6ff" stroke="#8490b8" /><path d="M2 5h2M5 5h3M2 8h2M5 8h3M2 11h2M5 11h3" stroke="#2c3d86" strokeWidth="1.500" /><path d="M12.500 15V6M10.500 1v3q2 3 4 0V1" stroke="#2c5fae" strokeWidth="2" fill="none" /></Ico>
      <Ico box="0 0 5 8" className="w-1 h-2 mb-2"><path d="M0 0l5 4-5 4z" fill="#000" /></Ico>
      <Ico className="w-4 h-4 ml-auto"><path d="M.5 1.500h15v12H.5z" fill="#eaf0ff" stroke="#5e73b4" /><path d="M1 2h14v2H1z" fill="#8199dc" /></Ico>
    </div>
    <div className="shrink-0 flex flex-col gap-[3px]">
      <SectionHeader title="Basic objects" />
      <SectionHeader title="Elements" />
      <SectionHeader title="Controls" open />
    </div>
    <div className="h-[126px] shrink-0 mb-[3px] flex bg-[#efefef] overflow-hidden">
      <div className="flex-1 grid grid-cols-[28px_28px] content-start gap-x-3.5 gap-y-2 pl-1.5 pt-1.5">
        {controls.map((drawing, i) => <Ico key={i} box="0 0 28 28" className="w-7 h-7">{drawing}</Ico>)}
      </div>
      <div className="w-[18px] shrink-0 flex flex-col bg-[#c4c4c4]">
        <ScrollButton dir="up" className="h-[18px]" />
        <Thumb vertical className="h-[38px]" />
        <div className="flex-1" />
        <ScrollButton dir="down" className="h-[18px]" />
      </div>
    </div>
    <div className="shrink-0 flex flex-col gap-[3px]">
      <SectionHeader title="My Controls" />
      <SectionHeader title="Graphics" open />
    </div>
    <div className="h-[25px] shrink-0 flex items-center gap-2 pl-1.5 bg-[#e9e9e9]">
      <Ico><path d="M1.500 2.500h5l1 2h7v9h-13z" fill="#f7d774" stroke="#a17a1c" /><Star x={11.5} y={5} /><path d="M0 9h7v7H0z" fill="#fff" /><path d="M1.500 14.500L5 11M2.500 10.500h3v3" stroke="#000" strokeWidth="1.300" fill="none" /></Ico>
      <Ico><path d="M1.500 2.500h5l1 2h7v9h-13z" fill="#e4e4e4" stroke="#999" /><path d="M8 9l7 7M15 9l-7 7" stroke="#555" strokeWidth="2" /><path d="M1.500 14.500L5 11M2.500 10.500h3v3" stroke="#555" fill="none" /></Ico>
    </div>
    <div className="h-[55px] shrink-0 flex bg-[#efefef]">
      <ul className="flex-1 overflow-hidden">
        <li className="h-[19px] flex items-center justify-end gap-1 pr-3 border-b border-white">
          <Ico box="0 0 8 5" className="w-2 h-[5px]"><path d="M0 0h8L4 5z" fill="#000" /></Ico>
          <LinkFolder arrow="green" />
          <span className="leading-4 bg-[#c3cbe0]">F</span>
        </li>
        <li className="h-[19px] flex items-center justify-end pr-[5px] border-b border-white"><LinkFolder /></li>
        <li className="h-[17px] flex items-center justify-end pr-[5px]"><LinkFolder /></li>
      </ul>
      <div className="w-[18px] shrink-0 flex flex-col justify-between bg-[#c4c4c4]">
        <ScrollButton dir="up" className="h-[18px]" />
        <Thumb className="h-[7px]" grip={false} />
        <ScrollButton dir="down" className="h-[18px]" />
      </div>
    </div>
    <div className="h-[19px] shrink-0 flex bg-[#c4c4c4]">
      <ScrollButton dir="left" className="w-[19px]" />
      <Thumb className="w-[39px] ml-px" />
      <div className="flex-1" />
      <ScrollButton dir="right" className="w-[18px]" />
      <div className="w-5 bg-[#e9e9e9]" />
    </div>
    <div className="h-[8px] shrink-0 flex justify-center gap-2.5 bg-[#e4e4e4] border-y border-[#888]">
      <span className="w-6 flex items-center justify-center bg-[#bdbdbd]"><Ico box="0 0 6 3" className="w-1.5 h-[3px]"><path d="M0 3l3-3 3 3z" /></Ico></span>
      <span className="w-6 flex items-center justify-center bg-[#bdbdbd]"><Ico box="0 0 6 3" className="w-1.5 h-[3px]"><path d="M0 0l3 3 3-3z" /></Ico></span>
    </div>
    <div className="flex-1 min-h-0 flex bg-[#efefef]">
      <div className="flex-1 grid grid-cols-[24px_24px] content-start gap-x-[18px] gap-y-3 pl-1 pt-3 overflow-hidden">
        {pipes.map((pipe) => <Pipe key={pipe[0]} pipe={pipe} />)}
      </div>
      <div className="w-[18px] shrink-0 flex flex-col bg-[#c4c4c4]">
        <ScrollButton dir="up" className="h-[18px]" />
        <Thumb vertical className="h-[18px]" />
        <div className="flex-1" />
        <ScrollButton dir="down" className="h-[18px]" />
      </div>
    </div>
  </aside>
);

const sideTabs = [
  { label: 'Toolbox', height: 'h-[95px]', active: true, icon: <><circle cx="9.500" cy="6" r="6" fill="#7b95ea" stroke="#4a63c0" /><path d="M0 15L4.500 5 9 15M2 11.500h5.500" stroke="#0e1a5c" strokeWidth="1.500" fill="none" /></> },
  { label: 'Animations', height: 'h-[118px]', icon: <><path d="M8 1h7v4H8z" fill="#3c9ab5" /><path d="M1 12h6v4H1z" fill="#a81fd0" /><path d="M3 6q4-3 5 1t3 1M12 5v5" stroke="#16205a" strokeWidth="1.600" fill="none" /></> },
  { label: 'Layout', height: 'h-[87px]', icon: <><path d="M4 1.500h11M4 4.500h11M4 7.500h11M10 10.500h5" stroke="#222" strokeWidth="1.500" strokeDasharray="1.500 1.500" /><path d="M1 8l9-2v2l-9 2zM1 11l9-2v2l-9 2zM1 14l9-2v2l-9 2z" fill="#e8b848" stroke="#9c7116" strokeWidth=".5" /></> },
  { label: 'Instructions', height: 'h-[121px]', icon: <><path d="M7 0v9M3 4.500h8M4 1.500l6 6M10 1.500l-6 6" stroke="#d818a8" strokeWidth="1.300" /><path d="M1.500 9.500h5v5h-5zM8.500 7.500h5v6h-5z" fill="#cfe0ff" stroke="#1c2b78" /></> },
  { label: 'Tasks', height: 'h-[79px]', icon: <><path d="M1.500 2.500h11v12h-11z" fill="#fff" stroke="#7d7437" strokeWidth="1.500" /><path d="M4 5.500h6M4 8h6M4 10.500h4" stroke="#333" /><path d="M6 11l3 4 6-9" stroke="#1e9b34" strokeWidth="2.200" fill="none" /></> },
];

const SideTabs = () => (
  <div className="w-[25px] shrink-0 flex flex-col gap-[3px] pt-[30px] border-l border-[#1c2233] bg-[#acacac] pr-[3px]">
    {sideTabs.map((tab) => (
      <button
        key={tab.label}
        className={clsx('shrink-0 flex flex-col items-center gap-[3px] pt-0.5 border border-l-0 border-[#777] text-[13px] font-semibold', tab.height, tab.active ? 'bg-[#f4f4f4] text-black' : 'bg-[#c9c9c9] text-[#555]')}
      >
        <Ico>{tab.icon}</Ico>
        <span className="[writing-mode:vertical-rl] leading-4">{tab.label}</span>
      </button>
    ))}
    <div className="mt-auto mb-px flex flex-col">
      <button aria-label="Previous tabs" className="h-[21px] flex items-center justify-center border border-[#888] bg-[#e2e2e2]"><Ico box="0 0 10 5" className="w-2.5 h-[5px]"><path d="M0 5l5-5 5 5z" fill="#777" /></Ico></button>
      <button aria-label="Next tabs" className="h-[21px] flex items-center justify-center border border-t-0 border-[#888] bg-[#e2e2e2]"><Ico box="0 0 10 5" className="w-2.5 h-[5px]"><path d="M0 0l5 5 5-5z" fill="#555" /></Ico></button>
    </div>
  </div>
);

/* ---------- portal status bar ---------- */

const WindowTab = ({ label, active, children }) => (
  <button className={clsx('w-[113px] h-5 flex items-center gap-1 pl-[3px] text-[11px] whitespace-nowrap', active ? 'bg-white text-black font-semibold' : 'bg-[#c4c4c4] text-[#222]')}>
    <Ico>{children}</Ico>
    {label}
  </button>
);

const StatusBar = () => (
  <footer className="h-[29px] shrink-0 flex items-center bg-[#1c1c1c] text-white">
    <button className="w-[181px] pl-9 flex items-center gap-[11px] text-[13px] font-semibold">
      <Ico box="0 0 6 12" className="w-1.5 h-3"><path d="M6 0v12L0 6z" fill="#fff" /></Ico>
      Portal view
    </button>
    <div className="flex gap-[3px]">
      <WindowTab label="Overview"><path d="M.5.5h15v14H.5z" fill="#fff" stroke="#24407a" /><path d="M1 1h14v2H1zM1 1h3v14H1z" fill="#46639f" /><path d="M6 6h3v2H6zM11 6h3v2h-3zM6 11h3v2H6zM11 11h3v2h-3z" fill="#222" /></WindowTab>
      <WindowTab label="Screen_1" active><path d="M.5 1.500h14v13H.5z" fill="#dfe6fb" stroke="#33427c" /><path d="M1 14V2l13 12z" fill="#c0cbef" /></WindowTab>
      <WindowTab label="Cyclic interr..."><path d="M4 4h9v9H4z" fill="#a12be8" stroke="#5c0c95" /><path d="M0 7h4M0 10h4M13 8.500h3" stroke="#5c0c95" strokeWidth="1.800" /><path d="M7 6.500h4v4H7z" fill="#7311b5" /></WindowTab>
    </div>
    <div className="ml-auto flex items-center">
      <button aria-label="Messages" className="w-5 h-5 flex items-center justify-center bg-[#c9c9c9]">
        <Ico><path d="M1.500.5h6v10h-6z" fill="#fff" stroke="#666" /><path d="M2 4h5M2 6h5M2 8h5" stroke="#555" /><path d="M9 6q5-3 5 4M11 3L9 6l3 1" stroke="#14206a" fill="none" strokeWidth="1.300" /><path d="M1 12h14v3H1z" fill="#445" /></Ico>
      </button>
      <span className="ml-1.5 h-7 border-l border-[#666]" />
      <Ico className="ml-[3px] w-3.5 h-3.5"><circle cx="8" cy="8" r="8" fill="#1414f0" /><path d="M8 7v6M6 7h2M5.500 13h5" stroke="#fff" strokeWidth="2" /><path d="M7 2.500h2.500V5H7z" fill="#fff" /></Ico>
      <p className="w-[245px] pl-[5px] text-[11px] whitespace-nowrap">The operand '"Tag_4"' was successfully ...</p>
      <div className="w-7 h-3 flex gap-px">
        {[0, 1, 2, 3, 4, 5].map((bar) => <span key={bar} className="w-[3px] bg-[#e8501a]" />)}
        <span className="w-[3px] bg-white" />
      </div>
      <Ico className="ml-5 mr-0.5 w-4 h-4"><path d="M0 0h16v16H0z" fill="#dfe3e8" /><path d="M2 1h12v9H2z" fill="#1d7a4b" stroke="#234" /><path d="M5 3h6v4H5z" fill="#4bd08a" /><path d="M2 12h12v3H2z" fill="#456" /></Ico>
    </div>
  </footer>
);

/* ---------- Windows taskbar ---------- */

const TextTile = ({ top, bottom }) => (
  <span className="w-6 h-6 bg-[#262d3d] text-[10px] leading-3 font-bold font-['Liberation_Sans',sans-serif] text-white flex flex-col items-center">
    <span>{top}</span><span className="text-[#a9b6dc]">{bottom}</span>
  </span>
);

const Blossom = ({ x, y, r }) => (
  <g transform={`translate(${x} ${y}) scale(${r})`}>
    {[0, 72, 144, 216, 288].map((a) => <ellipse key={a} cx="0" cy="-5.500" rx="4.300" ry="5" fill="#f9c3b0" stroke="#e8ad9b" strokeWidth=".5" transform={`rotate(${a})`} />)}
    <circle r="2" fill="#c7584c" />
    <path d="M0 0V-5M0 0l4-3M0 0l-4-3M0 0l3 4M0 0l-3 4" stroke="#c7584c" strokeWidth=".5" />
  </g>
);

const apps = [
  { name: 'Task View', art: <path d="M4 5v3h11V5M4 20v-3h11v3M4 10h11v5H4zM18.500 5v3M18.500 14v6M17 11h3" fill="none" stroke="#111" strokeWidth="1.500" /> },
  {
    name: 'Copilot',
    art: <><path d="M7 3q1-2 4-2h5q2 0 3 3l1 3h-4q-2 0-3 3l-3 9q-1 3-4 3-4 0-5-4-1-3 1-7z" fill="#1b8de0" /><path d="M7 3q1-2 4-2h5q-2 1-3 4l-2 8q-1 3-4 3H2q0-4 1-6z" fill="#3cc56f" /><path d="M7 3Q8 1 11 1h5q-2 1-3 4l-1 4H4z" fill="#2a5fd6" /><path d="M17 7h3q4 1 3 6l-2 6q-1 4-5 4h-5q2 0 3-3l3-10q0-2 0-3z" fill="#c350d0" /><path d="M20 13h3l-2 6q-1 4-5 4h-5q2 0 3-3l1-4z" fill="#ee5f76" /><path d="M2 16h6q2 0 3 3l1 3h2q-2 1-3 1-3 0-4-2z" fill="#f0b13c" /></>,
  },
  { name: 'File Explorer', art: <><path d="M1 3h8l2 3h12v15H1z" fill="#e5a520" /><path d="M1 7h22v14H1z" fill="#fbd668" /><path d="M5 21v-7h14v7h-4v-4H9v4z" fill="#3d8fd4" /></> },
  {
    name: 'Edge',
    art: <><circle cx="12" cy="12" r="11.500" fill="#1769c4" /><path d="M1 10C2 0 20-3 23.500 10c.5 5-4 7-8 6-2-1 0-2 0-4-1-6-10-6-14.500-2z" fill="#3fcf8e" /><path d="M1 10C2 3 9-1 15 1c-3 2-1 5-2 7-4-2-9-1-12 2z" fill="#2fb5dc" /><path d="M9 12c0 5 4 8 11 6-4 6-12 7-16 1-2-5 1-8 6-9z" fill="#0d4f9e" /><circle cx="13" cy="12" r="3" fill="#e9dcd9" /></>,
  },
  { name: 'Outlook', art: <><path d="M5 8l9-6 10 6v15H5z" fill="#1b7ad0" /><path d="M8 5h12v9H8z" fill="#57c5f5" /><path d="M5 23L24 9v14z" fill="#2f9ee8" /><path d="M0 5h14v14H0z" fill="#0f62b8" /><ellipse cx="7" cy="12" rx="3" ry="3.600" fill="none" stroke="#fff" strokeWidth="1.800" /></> },
  { name: 'Snipping Tool', art: <><ellipse cx="12" cy="8" rx="11" ry="6" fill="none" stroke="#d8545c" strokeWidth="1.300" transform="rotate(-18 12 8)" /><path d="M8 7l10 11M19 6l-6 12" stroke="#8a98a8" strokeWidth="1.600" /><circle cx="13" cy="19" r="2.600" fill="none" stroke="#2a7fc4" strokeWidth="1.700" /><circle cx="20" cy="19" r="2.600" fill="none" stroke="#2a7fc4" strokeWidth="1.700" /></> },
  { name: 'Chart viewer', art: <><path d="M8.500.5h15v16h-15z" fill="#e3f0f2" stroke="#9cbfca" /><path d="M12 1v15M16 1v15M20 1v15M9 5h14M9 9h14M9 13h14" stroke="#bdd6dc" /><circle cx="10" cy="13" r="9" fill="#e67a66" /><path d="M4 17l4-9 4 9 3-9" fill="none" stroke="#f7cfc2" strokeWidth="1.300" /><circle cx="11" cy="19" r="4" fill="#f9c4b4" opacity=".8" /></> },
  { name: 'Word', art: <><path d="M1.500 1.500h21v21h-21z" fill="#eaf1fb" stroke="#4770ae" /><path d="M4 5l3 11 4-10 3 10 4-12" fill="none" stroke="#1f5bb5" strokeWidth="3" /><path d="M19 8h3M19 11h3" stroke="#8aa5cf" strokeWidth="1.500" /><path d="M15 22l8-6v6z" fill="#b8cdec" /></> },
  { name: 'Chrome', running: true, art: <><circle cx="12" cy="12" r="11.500" fill="#f5c518" /><path d="M12 12L2 6Q6 .5 12 .5 19 .5 22.500 7H12z" fill="#df3b2f" /><path d="M2 6q-3 8 2 13 3 4 8 4.500l4-8H9z" fill="#26a052" /><circle cx="12" cy="12" r="5.300" fill="#fff" /><circle cx="12" cy="12" r="4.200" fill="#2f76e8" /><circle cx="19" cy="18" r="5.500" fill="#554a48" /><path d="M16 22q1-5 4-4t3 4z" fill="#cf2f38" /><circle cx="18" cy="16" r="1.700" fill="#c9a994" /></> },
  { name: 'TIA Portal', running: true, active: true, tile: ['TIA', 'V16'] },
  { name: 'PLCSIM', running: true, tile: ['PLC', 'SIM'] },
];

const Taskbar = () => (
  <footer className="h-10 shrink-0 flex items-center bg-linear-to-r from-[#d8e5ee] via-[#ecdfdd] via-40% to-[#ecdcd7] text-[#1a1a1a]">
    <button aria-label="Start" className="w-12 h-full shrink-0 flex items-center justify-center">
      <Ico><path d="M0 2l7-1v6.500H0zM8 1l8-1v7.500H8zM0 8.500h7V15l-7-1zM8 8.500h8V16l-8-1z" fill="#000" /></Ico>
    </button>
    <div className="w-[287px] h-full shrink-0 pl-3 flex items-center bg-white border border-[#d5d5d5]">
      <Ico className="w-4 h-4"><circle cx="10" cy="6" r="5" fill="none" stroke="#111" strokeWidth="1.200" /><path d="M6.500 9.500L.5 15.500" stroke="#111" strokeWidth="1.200" /></Ico>
      <input aria-label="Search" placeholder="Type here to search" className="ml-[11px] w-[170px] text-[14px] font-[Open_Sans,Noto_Sans,sans-serif] placeholder:text-[#444]" />
      <Ico box="0 0 70 38" className="w-[70px] h-[38px] ml-1.5">
        <path d="M2 38c8-1 12-4 14-9 1-6-2-9-4-13M15 30c6-4 12-4 18-4M16 24c2-7 3-12 2-18M45 14l8-6 7-3M54 8V2" fill="none" stroke="#7c3f2c" strokeWidth="1.500" />
        <path d="M4 38c6-2 9-5 11-9l4 1c8-4 14-4 14-3-8 2-12 5-17 11z" fill="#8d4630" />
        <Blossom x={29} y={15} r={1.2} /><Blossom x={49} y={22} r={0.9} />
        <circle cx="16" cy="8" r="3.500" fill="#f4a99b" /><circle cx="9" cy="13" r="2" fill="#f4a99b" /><circle cx="60" cy="6" r="2.200" fill="#f4a99b" /><circle cx="2" cy="18" r="1.200" fill="#f9cfc6" /><circle cx="64" cy="18" r="1.200" fill="#f9cfc6" /><circle cx="40" cy="3" r="1.200" fill="#f9cfc6" />
      </Ico>
    </div>
    <div className="h-full ml-0.5 flex gap-px">
      {apps.map((app) => (
        <button key={app.name} aria-label={app.name} className={clsx('w-12 h-full shrink-0 flex flex-col items-center pt-2', app.active && 'bg-[#f5edeb]')}>
          {app.tile ? <TextTile top={app.tile[0]} bottom={app.tile[1]} /> : <Ico box="0 0 24 24" className="w-6 h-6">{app.art}</Ico>}
          {app.running && <span className={clsx('mt-auto h-0.5 bg-[#0b6fc7]', app.active ? 'w-12' : 'w-10')} />}
        </button>
      ))}
    </div>
    <div className="ml-auto h-full flex items-center pr-[25px] text-[14px] font-[Open_Sans,Noto_Sans,sans-serif]">
      <Ico box="0 0 24 24" className="w-6 h-6">
        <circle cx="11" cy="13" r="10" fill="#f3902a" /><path d="M2 10q4 12 17 9-4 4-9 4-8-1-8-13z" fill="#f9b23c" />
        <circle cx="17" cy="6" r="6" fill="#c92a20" /><path d="M15.500 4.500L17.500 3v6" stroke="#fff" strokeWidth="1.200" fill="none" />
      </Ico>
      <button className="ml-1.5 w-[98px] text-left whitespace-pre">27°C  Sunny</button>
      <div className="flex items-center gap-2">
        <Ico box="0 0 16 16" className="w-4 h-4"><path d="M2.500 11L8 5.500l5.500 5.500" fill="none" stroke="#111" strokeWidth="1.300" /></Ico>
        <Ico><path d="M3.500 4.500h7v7h-7zM10.500 7l3-2v6l-3-2M3 2q4-2.500 8 0M3 14q4 2.500 8 0" fill="none" stroke="#111" strokeWidth="1.200" /></Ico>
        <Ico><path d="M1 2.500l14-1v12l-14 1z" fill="none" stroke="#111" strokeWidth="1.200" /><path d="M5 8q0-3 3-3l2 1M10 8q0 3-3 3l-2-1" fill="none" stroke="#111" /><path d="M10 9h6v7h-6z" fill="#f0a020" /></Ico>
        <Ico><path d="M1 15Q1 3 14 2M4 15Q4 6 14 5M7 15q0-6 7-7M10 15q0-3 4-4" fill="none" stroke="#111" strokeWidth="1.100" /><circle cx="13" cy="14" r="1.500" fill="#111" /></Ico>
        <Ico><path d="M1 6v4h2.500L7 13V3L3.500 6zM9.500 6q1.500 2 0 4M11.500 4.500q3 3.500 0 7M13.500 3q4 5 0 10" fill="none" stroke="#111" strokeWidth="1.100" /></Ico>
      </div>
      <div className="ml-2 text-center text-[12px] leading-[18px] whitespace-nowrap">
        <div>11:35 PM</div>
        <div>3/28/2025</div>
      </div>
      <Ico className="ml-4 w-4 h-4"><path d="M.5 1.500h15v10h-5L8 14.500 5.500 11.500h-5z" fill="none" stroke="#111" strokeWidth="1.200" /></Ico>
    </div>
  </footer>
);

export default function App() {
  return (
    <div className="h-screen flex flex-col overflow-hidden font-['Noto_Sans',sans-serif] text-[12px] text-[#222]">
      <TitleBar />
      <MainToolbar />
      <div className="flex-1 min-h-0 flex">
        <div className="w-6 shrink-0 flex flex-col bg-[#acacac] border-r border-[#1c2233]">
          <div className="h-[25px] border-b border-white" />
          <button className="h-[221px] flex items-center justify-center border-b border-white text-white text-[13px] font-semibold">
            <span className="[writing-mode:vertical-rl] rotate-180 leading-5">Visualization</span>
          </button>
        </div>
        <ProjectTree />
        <div className="w-[3px] shrink-0 bg-[#1c2233]" />
        <Editor />
        <div className="w-[3px] shrink-0 bg-[#1c2233]" />
        <Toolbox />
        <SideTabs />
      </div>
      <StatusBar />
      <Taskbar />
    </div>
  );
}
